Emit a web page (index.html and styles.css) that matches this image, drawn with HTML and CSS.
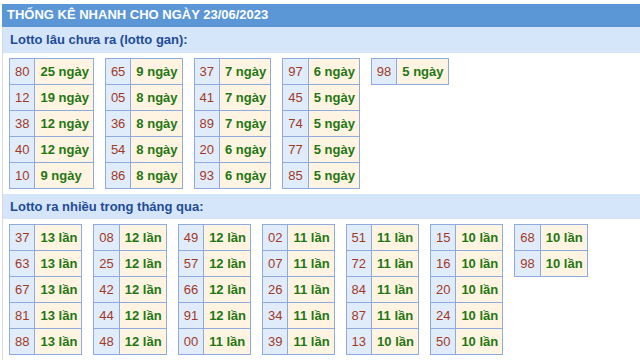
FILE: index.html
```html
<!DOCTYPE html>
<html>
<head>
<meta charset="utf-8">
<link rel="stylesheet" href="styles.css">
</head>
<body>
<div class="box">
  <div class="title">THỐNG KÊ NHANH CHO NGÀY 23/06/2023</div>
  <div class="sub">Lotto lâu chưa ra (lotto gan):</div>
  <div class="tables">
    <table><tr><td class="n">80</td><td class="v">25 ngày</td></tr><tr><td class="n">12</td><td class="v">19 ngày</td></tr><tr><td class="n">38</td><td class="v">12 ngày</td></tr><tr><td class="n">40</td><td class="v">12 ngày</td></tr><tr><td class="n">10</td><td class="v">9 ngày</td></tr></table>
    <table><tr><td class="n">65</td><td class="v">9 ngày</td></tr><tr><td class="n">05</td><td class="v">8 ngày</td></tr><tr><td class="n">36</td><td class="v">8 ngày</td></tr><tr><td class="n">54</td><td class="v">8 ngày</td></tr><tr><td class="n">86</td><td class="v">8 ngày</td></tr></table>
    <table><tr><td class="n">37</td><td class="v">7 ngày</td></tr><tr><td class="n">41</td><td class="v">7 ngày</td></tr><tr><td class="n">89</td><td class="v">7 ngày</td></tr><tr><td class="n">20</td><td class="v">6 ngày</td></tr><tr><td class="n">93</td><td class="v">6 ngày</td></tr></table>
    <table><tr><td class="n">97</td><td class="v">6 ngày</td></tr><tr><td class="n">45</td><td class="v">5 ngày</td></tr><tr><td class="n">74</td><td class="v">5 ngày</td></tr><tr><td class="n">77</td><td class="v">5 ngày</td></tr><tr><td class="n">85</td><td class="v">5 ngày</td></tr></table>
    <table><tr><td class="n">98</td><td class="v">5 ngày</td></tr></table>
  </div>
  <div class="sub">Lotto ra nhiều trong tháng qua:</div>
  <div class="tables">
    <table><tr><td class="n">37</td><td class="v">13 lần</td></tr><tr><td class="n">63</td><td class="v">13 lần</td></tr><tr><td class="n">67</td><td class="v">13 lần</td></tr><tr><td class="n">81</td><td class="v">13 lần</td></tr><tr><td class="n">88</td><td class="v">13 lần</td></tr></table>
    <table><tr><td class="n">08</td><td class="v">12 lần</td></tr><tr><td class="n">25</td><td class="v">12 lần</td></tr><tr><td class="n">42</td><td class="v">12 lần</td></tr><tr><td class="n">44</td><td class="v">12 lần</td></tr><tr><td class="n">48</td><td class="v">12 lần</td></tr></table>
    <table><tr><td class="n">49</td><td class="v">12 lần</td></tr><tr><td class="n">57</td><td class="v">12 lần</td></tr><tr><td class="n">66</td><td class="v">12 lần</td></tr><tr><td class="n">91</td><td class="v">12 lần</td></tr><tr><td class="n">00</td><td class="v">11 lần</td></tr></table>
    <table><tr><td class="n">02</td><td class="v">11 lần</td></tr><tr><td class="n">07</td><td class="v">11 lần</td></tr><tr><td class="n">26</td><td class="v">11 lần</td></tr><tr><td class="n">34</td><td class="v">11 lần</td></tr><tr><td class="n">39</td><td class="v">11 lần</td></tr></table>
    <table><tr><td class="n">51</td><td class="v">11 lần</td></tr><tr><td class="n">72</td><td class="v">11 lần</td></tr><tr><td class="n">84</td><td class="v">11 lần</td></tr><tr><td class="n">87</td><td class="v">11 lần</td></tr><tr><td class="n">13</td><td class="v">10 lần</td></tr></table>
    <table><tr><td class="n">15</td><td class="v">10 lần</td></tr><tr><td class="n">16</td><td class="v">10 lần</td></tr><tr><td class="n">20</td><td class="v">10 lần</td></tr><tr><td class="n">24</td><td class="v">10 lần</td></tr><tr><td class="n">50</td><td class="v">10 lần</td></tr></table>
    <table><tr><td class="n">68</td><td class="v">10 lần</td></tr><tr><td class="n">98</td><td class="v">10 lần</td></tr></table>
  </div>
</div>
</body>
</html>
```
FILE: styles.css
```css
html, body {
  margin: 0;
  padding: 0;
  background: #fff;
}
body {
  font-family: "Liberation Sans", Arial, sans-serif;
  font-size: 13px;
}
.box {
  margin: 4px 0 0 2px;
  border-left: 1px solid #d9d9d9;
  width: 640px;
  min-height: 360px;
}
.title {
  background: #5b96d6;
  color: #fff;
  font-weight: bold;
  height: 23px;
  line-height: 22px;
  padding-left: 5px;
  margin-left: -1px;
}
.sub {
  background: #d5e6fa;
  color: #1f4b97;
  font-weight: bold;
  height: 26px;
  line-height: 26px;
  padding-left: 7px;
}
.tables {
  display: flex;
  align-items: flex-start;
  gap: 11px;
  padding: 5px 0 5px 6px;
}
.tables + .sub {
  height: 25px;
  line-height: 25px;
}
table {
  border-collapse: collapse;
}
td {
  border: 1px solid #8eaade;
  height: 26px;
  box-sizing: border-box;
  line-height: 15px;
  white-space: nowrap;
}
td.n {
  background: #e1ecfb;
  color: #a03a26;
  padding: 0 5px;
}
td.v {
  background: #fff3e1;
  color: #1f7714;
  font-weight: bold;
  padding: 0 4px 0 5px;
}
```
